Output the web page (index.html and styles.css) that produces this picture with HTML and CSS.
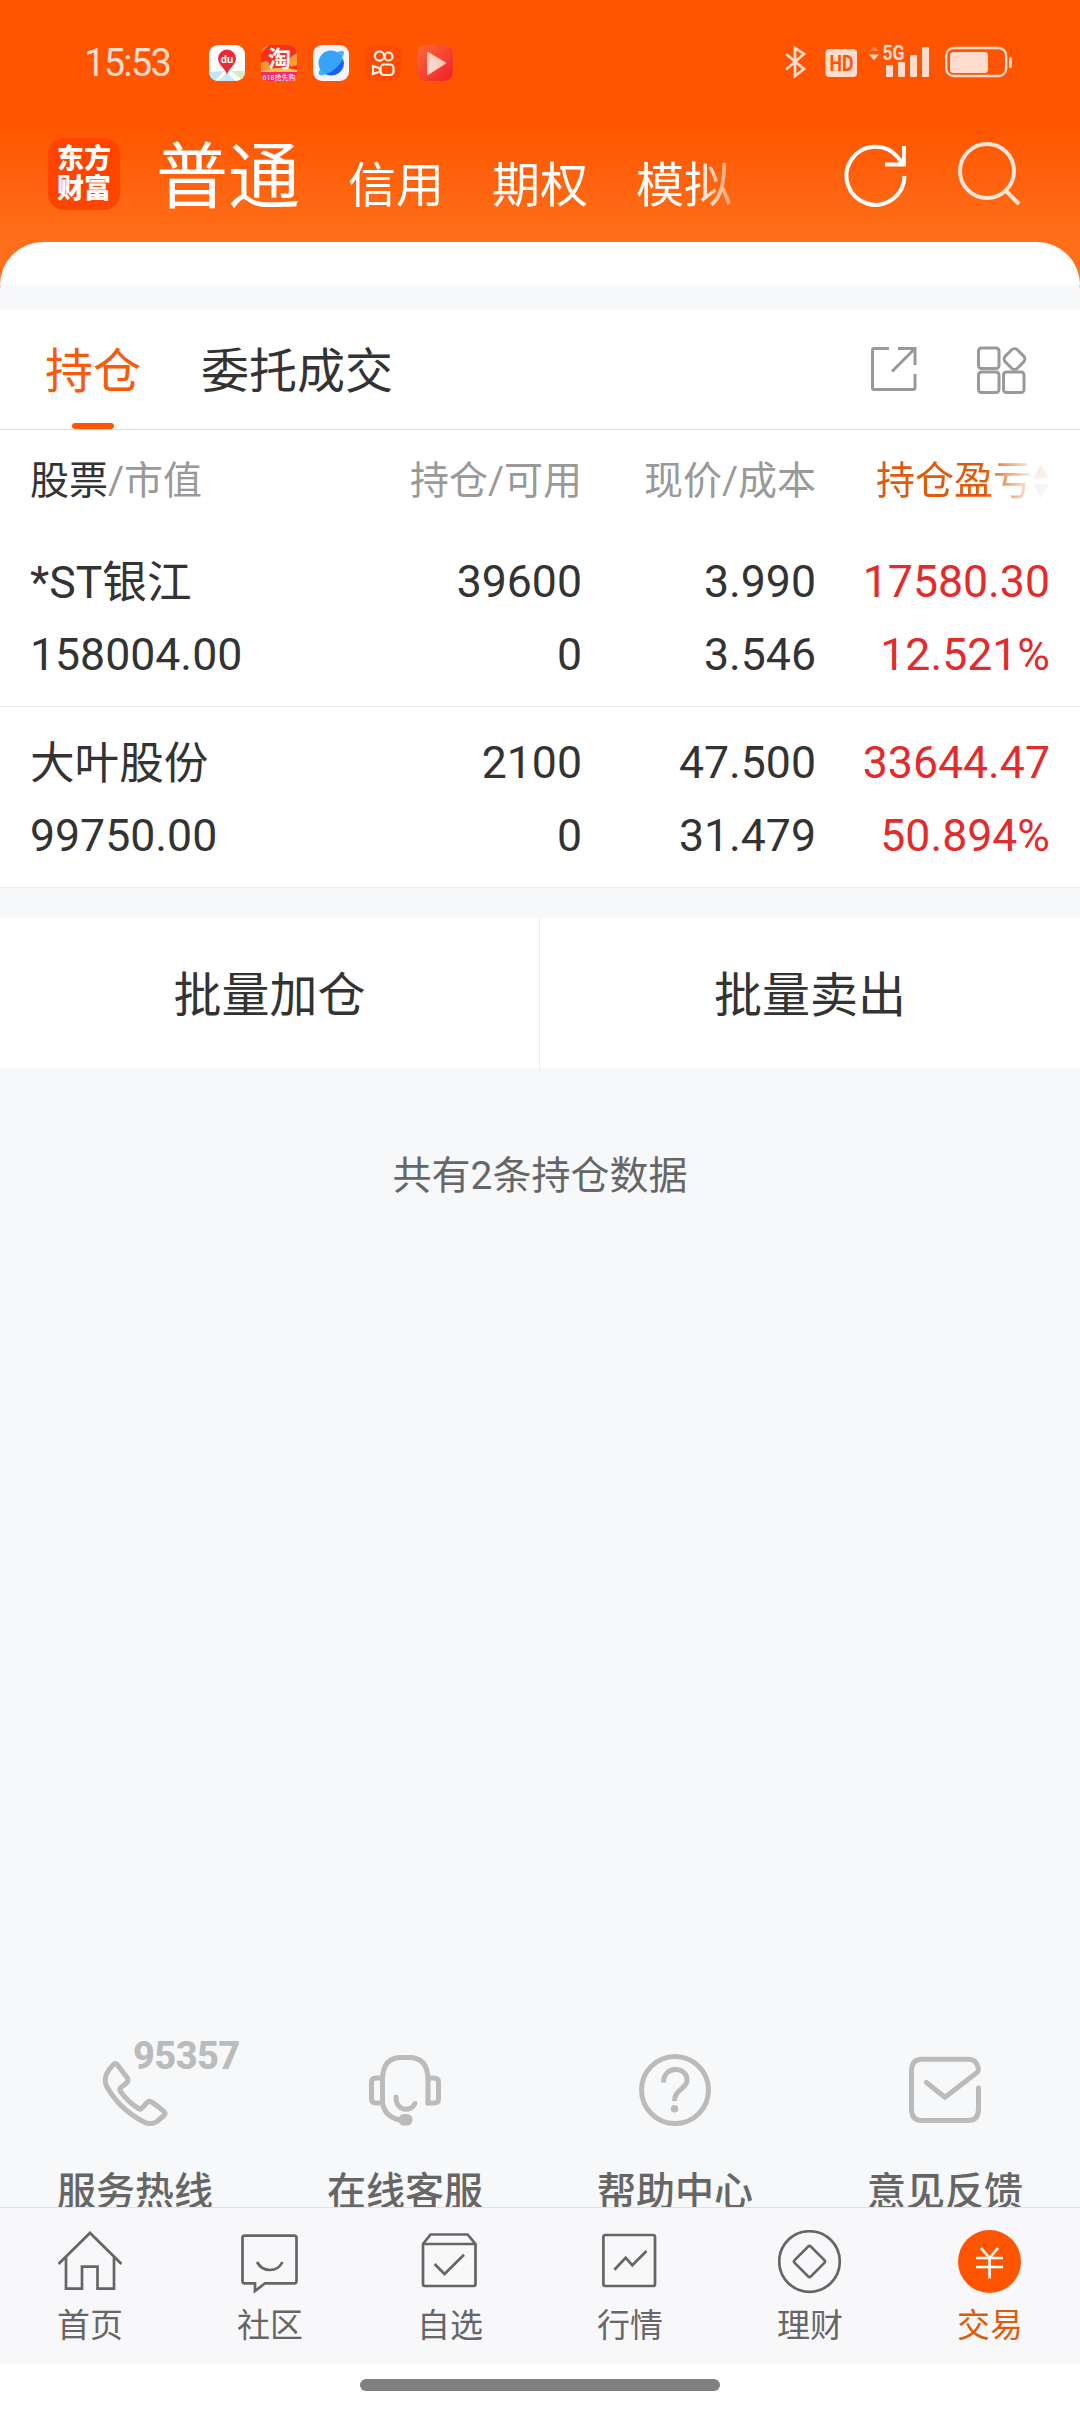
FILE: index.html
```html
<!DOCTYPE html>
<html lang="zh-CN">
<head>
    <meta charset="UTF-8">
    <title>交易 - 持仓</title>
    <link rel="stylesheet" href="styles.css">
</head>
<body>
    <header class="top">
        <div class="status-bar">
            <span class="clock">15:53</span>
            <div class="app-icons">
                <svg width="36" height="36" viewBox="0 0 36 36">
                    <defs><clipPath id="r"><rect width="36" height="36" rx="9"/></clipPath></defs>
                    <g clip-path="url(#r)">
                        <rect width="36" height="36" fill="#fff"/>
                        <path d="M0 27L15 26L6 36H0Z" fill="#bfe6f8"/>
                        <path d="M18 28L27 36H9Z" fill="#c5e8fa"/>
                        <path d="M22 26H36V34H32Z" fill="#d3efb9"/>
                        <path d="M18 30C17 24 9 20 9 13.500A9 9 0 0 1 27 13.500C27 20 19 24 18 30Z" fill="#ee2a36"/>
                    </g>
                    <text x="18" y="17.500" class="du">du</text>
                </svg>
                <svg width="36" height="36" viewBox="0 0 36 36">
                    <g clip-path="url(#r)">
                        <rect width="36" height="36" fill="#f5301c"/>
                        <path d="M0 8L8 0H0ZM0 18Q10 12 8 24L0 26ZM36 8Q24 14 30 22L36 20Z" fill="#ff9a32"/>
                        <path d="M0 26Q18 20 36 25V28H0Z" fill="#ffc04d"/>
                        <rect y="27" width="36" height="9" fill="#ee2c6e"/>
                    </g>
                    <text x="18.500" y="22" class="tao">淘</text>
                    <text x="18" y="34.500" class="tao-sub">618抢先购</text>
                </svg>
                <svg width="36" height="36" viewBox="0 0 36 36">
                    <rect width="36" height="36" rx="9" fill="#f3f5f8"/>
                    <path d="M25 7Q31 4 31 8Q31 10 29 13L13 29Q6 32 6 29Q5 27 8 23Z" fill="#48b4fb"/>
                    <circle cx="18" cy="18" r="12.500" fill="#37a4fa"/>
                    <path d="M30 14Q33 22 26 28Q20 32 13 29Q24 25 30 14Z" fill="#1c62ee"/>
                </svg>
                <svg width="36" height="36" viewBox="0 0 36 36" fill="none" stroke="#fff4e8" stroke-width="2.200">
                    <rect width="36" height="36" rx="9" fill="#ff4a06" stroke="none"/>
                    <circle cx="14.500" cy="11" r="4.700"/>
                    <circle cx="23.500" cy="11.500" r="4"/>
                    <rect x="15.500" y="19.500" width="13" height="10.500" rx="3.500"/>
                    <path d="M8 21V29L15 26.500V23.500Z"/>
                </svg>
                <svg width="36" height="36" viewBox="0 0 36 36">
                    <defs><linearGradient id="p" x2="1" y2="1"><stop stop-color="#ff6a3c"/><stop offset="1" stop-color="#ee1f26"/></linearGradient></defs>
                    <rect width="36" height="36" rx="9" fill="url(#p)"/>
                    <path d="M11 8L28 18L11 29Z" fill="#ffcabd" stroke="#ffcabd" stroke-linejoin="round" stroke-width="2"/>
                    <path d="M10 18L18 13L21 23L11 28Z" fill="#ffe0da" opacity=".5"/>
                </svg>
            </div>
            <svg class="signals" width="230" height="40" viewBox="0 0 230 40">
                <g fill="none" stroke="#ffdccd" stroke-width="2.700">
                    <path d="M2 11L20 26L11 33V5L20 11L2 26.500"/>
                    <rect x="162.200" y="5" width="60" height="28" rx="7.500" stroke-width="2.300"/>
                </g>
                <g fill="#ffdccd">
                    <rect x="41.500" y="6" width="31.500" height="28" rx="4"/>
                    <path d="M85 11.500H95L90 17Z"/>
                    <path d="M85 8H95L90 3Z" opacity=".3"/>
                    <rect x="102" y="22" width="7" height="12" rx="1"/>
                    <rect x="114" y="19" width="7" height="15" rx="1"/>
                    <rect x="126" y="12" width="7" height="22" rx="1"/>
                    <rect x="138" y="4" width="7" height="30" rx="1"/>
                    <rect x="166" y="9" width="38" height="21" rx="3.500"/>
                    <rect x="225" y="14" width="3" height="11" rx="1.500"/>
                </g>
                <text x="45.500" y="28" class="hd" textLength="24" lengthAdjust="spacingAndGlyphs">HD</text>
                <text x="98.500" y="17" class="net" textLength="22" lengthAdjust="spacingAndGlyphs">5G</text>
            </svg>
        </div>
        <nav class="accounts">
            <div class="logo"><span>东方</span><span>财富</span></div>
            <div class="account-tabs">
                <span class="account active">普通</span>
                <span class="account">信用</span>
                <span class="account">期权</span>
                <span class="account">模拟</span>
            </div>
            <svg class="refresh" width="64" height="64" viewBox="0 0 64 64" fill="none" stroke="#fff" stroke-width="4">
                <path d="M60.500 33A29 29 0 1 1 54 14.500L59 21"/>
                <path d="M60 3V21.500H41"/>
            </svg>
            <svg class="search" width="66" height="66" viewBox="0 0 66 66" fill="none" stroke="#ffe5d8" stroke-width="4">
                <circle cx="30" cy="30" r="27"/>
                <path d="M48.500 49.500L62 63"/>
            </svg>
        </nav>
    </header>

    <div class="sheet-top"></div>

    <main>
        <section class="tabs">
            <div class="tab active">持仓</div>
            <div class="tab">委托成交</div>
            <div class="tools">
                <svg width="48" height="48" viewBox="0 0 48 48" fill="none" stroke="#999" stroke-width="3">
                    <path d="M19 2.500H4Q2.500 2.500 2.500 4V42Q2.500 43.500 4 43.500H43Q45 43.500 45 41.500V28"/>
                    <path d="M28 2.500H45V19M45 2.500L22 25.500"/>
                </svg>
                <svg width="52" height="50" viewBox="0 0 52 50" fill="none" stroke="#999" stroke-width="3">
                    <rect x="3.500" y="2" width="20.500" height="20.500" rx="3"/>
                    <rect x="3.500" y="26" width="20.500" height="20.500" rx="3"/>
                    <rect x="28.500" y="26" width="20.500" height="20.500" rx="3"/>
                    <rect x="31" y="4.500" width="17" height="17" rx="4" transform="rotate(45 39.500 13)"/>
                </svg>
            </div>
        </section>

        <section class="holdings">
            <div class="row head">
                <div><b>股票</b>/市值</div>
                <div>持仓/可用</div>
                <div>现价/成本</div>
                <div class="sort">
                    <span>持仓盈亏</span>
                    <svg width="16" height="36" viewBox="0 0 16 36"><path d="M0 15L8 1L16 15Z" fill="#ff5500"/><path d="M0 21H16L8 35Z" fill="#999"/></svg>
                </div>
            </div>
            <div class="row">
                <div><p class="name">*ST银江</p><p>158004.00</p></div>
                <div><p>39600</p><p>0</p></div>
                <div><p>3.990</p><p>3.546</p></div>
                <div class="up"><p>17580.30</p><p>12.521%</p></div>
            </div>
            <div class="row">
                <div><p class="name">大叶股份</p><p>99750.00</p></div>
                <div><p>2100</p><p>0</p></div>
                <div><p>47.500</p><p>31.479</p></div>
                <div class="up"><p>33644.47</p><p>50.894%</p></div>
            </div>
        </section>

        <section class="batch">
            <div>批量加仓</div>
            <div>批量卖出</div>
        </section>

        <p class="count">共有2条持仓数据</p>

        <section class="services">
            <div class="service">
                <span class="hotline">95357</span>
                <svg width="72" height="72" viewBox="0 0 72 72">
                    <path d="M14 11Q16.400 8 18.500 11L28 23.500Q30 26.500 27.500 29L22 33.500Q20 35 21.500 37.500Q29 48 39.500 54.500Q41.500 56 43 54L48 48.500Q50 46.500 52.500 48Q59 52 65 57.500Q67 59.500 65 61.500L58 67.500Q52 71.500 45 68Q20 55 7.500 32Q5 27 7.500 20Q10 15 14 11Z"/>
                </svg>
                <span>服务热线</span>
            </div>
            <div class="service">
                <svg width="72" height="72" viewBox="0 0 72 72">
                    <path d="M13.500 49V24Q14.500 3.500 32 3.500H40Q58 3.500 59 24V49M13.500 49Q16 63 31 66"/>
                    <path d="M13 24H7Q2.500 24 2.500 28V45Q2.500 49 7 49H13M59 24H65Q69.500 24 69.500 28V45Q69.500 49 65 49H59"/>
                    <path d="M27 43C27 58 42 58 46 49.500"/>
                    <rect x="32" y="62.500" width="9" height="6.500" rx="3" fill="#bbb"/>
                </svg>
                <span>在线客服</span>
            </div>
            <div class="service">
                <svg width="72" height="72" viewBox="0 0 72 72">
                    <circle cx="36" cy="36" r="33.500"/>
                    <path stroke-linecap="butt" d="M24.500 28.500C24.500 11 48 12 48 26C48 35 35.500 35 35.500 47"/>
                    <circle cx="35.500" cy="54.700" r="3.800" fill="#bbb" stroke="none"/>
                </svg>
                <span>帮助中心</span>
            </div>
            <div class="service">
                <svg width="72" height="72" viewBox="0 0 72 72">
                    <path d="M69.500 34V55Q69.500 66.500 59 66.500H13Q2.500 66.500 2.500 55V17Q2.500 5.300 13 5.300H59Q67 5.300 69 13Q70 17 68 18.500L36 43.300L17.400 28.500"/>
                </svg>
                <span>意见反馈</span>
            </div>
        </section>
    </main>

    <nav class="bottom-nav">
        <div class="nav-item">
            <svg width="64" height="64" viewBox="0 0 64 64">
                <path d="M.5 34L32 3L63.500 34M8 27V58.700H24V36.700H39.500V58.700H56V27"/>
            </svg>
            <span>首页</span>
        </div>
        <div class="nav-item">
            <svg width="64" height="64" viewBox="0 0 64 64">
                <path d="M6.500 5.700H56.500Q58.500 5.700 58.500 8V51Q58.500 53.300 56.500 53.300H27L17 61V53.300H6.500Q4.500 53.300 4.500 51V8Q4.500 5.700 6.500 5.700Z"/>
                <path d="M19 32Q23.500 40 32 40Q40.500 40 44.500 32"/>
            </svg>
            <span>社区</span>
        </div>
        <div class="nav-item">
            <svg width="64" height="64" viewBox="0 0 64 64">
                <path d="M5 14L12.500 4.500H49.600L57.500 14V54Q57.500 56 55.500 56H7Q5 56 5 54ZM5 14H57.500M16.600 34L26.500 44L46 24.700"/>
            </svg>
            <span>自选</span>
        </div>
        <div class="nav-item">
            <svg width="64" height="64" viewBox="0 0 64 64">
                <rect x="5.400" y="5" width="51.600" height="51" rx="2"/>
                <path d="M16.400 39.700L27.700 27.700L34.300 35.300L48.500 21"/>
            </svg>
            <span>行情</span>
        </div>
        <div class="nav-item">
            <svg width="64" height="64" viewBox="0 0 64 64">
                <circle cx="31.500" cy="31.500" r="30.300"/>
                <rect x="20" y="20" width="23" height="23" rx="2" transform="rotate(45 31.500 31.500)"/>
            </svg>
            <span>理财</span>
        </div>
        <div class="nav-item active">
            <svg width="64" height="64" viewBox="0 0 64 64">
                <circle cx="31.500" cy="31.500" r="31.500"/>
                <path d="M23 18L31.500 28L40 18M31.500 28V48.500M18 28H45M18 37H45"/>
            </svg>
            <span>交易</span>
        </div>
    </nav>
    <div class="gesture"><i></i></div>
</body>
</html>
```

FILE: styles.css
```css
* {
    box-sizing: border-box;
    margin: 0;
    padding: 0;
}
body {
    width: 1080px;
    height: 2412px;
    display: flex;
    flex-direction: column;
    overflow: hidden;
    background: #f7f8fa;
    color: #333;
    font-family: Roboto, "Noto Sans CJK SC", sans-serif;
}
svg {
    display: block;
    flex-shrink: 0;
}

/* header */
.top {
    height: 290px;
    flex-shrink: 0;
    background: linear-gradient(#ff5500 0, #ff5500 122px, #ff6e19 235px);
    color: #fff;
}
.status-bar {
    display: flex;
    height: 126px;
    padding: 43px 66px 0 84px;
}
.clock {
    width: 125px;
    padding-top: 1px;
    color: #ffdccd;
    font-size: 38px;
    line-height: 38px;
    letter-spacing: -1.7px;
}
.app-icons {
    display: flex;
    gap: 16px;
    padding-top: 2px;
}
.signals {
    margin-left: auto;
}
.du {
    fill: #fff;
    font-size: 11px;
    font-weight: bold;
    text-anchor: middle;
}
.tao {
    fill: #fff;
    font-size: 23px;
    font-weight: bold;
    text-anchor: middle;
}
.tao-sub {
    fill: #fff;
    font-size: 7px;
    text-anchor: middle;
}
.hd {
    fill: #ff5500;
    font-size: 22px;
    font-weight: bold;
}
.net {
    fill: #ffdccd;
    font-size: 21px;
    font-weight: bold;
}
.accounts {
    display: flex;
    padding: 12px 0 0 48px;
}
.logo {
    width: 72px;
    height: 72px;
    padding-top: 6px;
    border-radius: 16px;
    background: #ff4400;
    font-size: 27px;
    font-weight: 900;
    line-height: 30px;
    text-align: center;
}
.logo span {
    display: block;
}
.account-tabs {
    display: flex;
    align-items: baseline;
    gap: 48px;
    width: 600px;
    height: 104px;
    margin-top: -10px;
    margin-left: 36px;
    line-height: 100px;
    -webkit-mask-image: linear-gradient(90deg, #000 540px, transparent 600px);
    mask-image: linear-gradient(90deg, #000 540px, transparent 600px);
}
.account {
    font-size: 48px;
}
.account.active {
    font-size: 72px;
}
.refresh {
    margin: 5px 0 0 88px;
}
.search {
    margin: 3px 0 0 49px;
}

/* white sheet that overlaps the header */
.sheet-top {
    height: 43px;
    flex-shrink: 0;
    margin-top: -48px;
    border-radius: 48px 48px 0 0;
    background: #fff;
    box-shadow: 0 5px 0 #f7f8fa;
}

main {
    flex: 1;
    min-height: 0;
    display: flex;
    flex-direction: column;
    overflow: hidden;
    padding-top: 24px;
}
.tabs {
    display: flex;
    gap: 60px;
    height: 121px;
    padding: 0 53px 0 45px;
    flex-shrink: 0;
    background: #fff;
    border-bottom: 1px solid #ddd;
    font-size: 48px;
    line-height: 125px;
}
.tab.active {
    color: #f75a08;
}
.tab.active::after {
    content: "";
    display: block;
    width: 42px;
    height: 6px;
    margin: -11px auto 0;
    border-radius: 3px;
    background: #ff5500;
}
.tools {
    display: flex;
    gap: 57px;
    margin-left: auto;
    padding-top: 37px;
}

/* holdings table */
.holdings {
    flex-shrink: 0;
    background: #fff;
}
.row {
    display: grid;
    grid-template-columns: 300px 252px 234px 234px;
    height: 181px;
    padding: 20px 30px 0;
    border-bottom: 1px solid #eaebed;
    font-size: 44.6px;
    text-align: right;
}
.row p {
    height: 73px;
    line-height: 73px;
}
.row .name {
    padding-top: 1px;
}
.row > div:first-child {
    text-align: left;
}
.row.head {
    height: 96px;
    padding-top: 0;
    border: none;
    color: #999;
    font-size: 39px;
    line-height: 102px;
}
.head b {
    color: #333;
    font-weight: normal;
}
.sort {
    display: flex;
    justify-content: flex-end;
    align-items: center;
    gap: 1px;
    padding-right: 1px;
    color: #e05a0c;
    -webkit-mask-image: linear-gradient(90deg, #000 168px, rgba(0, 0, 0, .13) 214px, rgba(0, 0, 0, .08));
    mask-image: linear-gradient(90deg, #000 168px, rgba(0, 0, 0, .13) 214px, rgba(0, 0, 0, .08));
}
.up {
    color: #e32b2b;
}

.batch {
    display: grid;
    grid-template-columns: 540px 540px;
    height: 150px;
    margin-top: 30px;
    flex-shrink: 0;
    background: #fff;
    font-size: 48px;
    line-height: 156px;
    text-align: center;
}
.batch div:first-child {
    border-right: 1px solid #eee;
}
.count {
    margin-top: 79px;
    color: #666;
    font-size: 39px;
    line-height: 58px;
    text-align: center;
}

/* the captions run under the bottom nav */
.services {
    display: grid;
    grid-template-columns: repeat(4, 1fr);
    height: 153px;
    margin-top: auto;
    flex-shrink: 0;
}
.service {
    position: relative;
    display: flex;
    flex-direction: column;
    align-items: center;
    gap: 37px;
    color: #666;
    font-size: 39px;
    font-weight: 500;
    line-height: 58px;
}
.service svg {
    fill: none;
    stroke: #bbb;
    stroke-width: 5;
    stroke-linecap: round;
    stroke-linejoin: round;
}
.hotline {
    position: absolute;
    left: 133px;
    top: -16px;
    color: #bbb;
    font-size: 38px;
    font-weight: 800;
    line-height: 37px;
    letter-spacing: -.6px;
}

/* bottom nav */
.bottom-nav {
    display: grid;
    grid-template-columns: repeat(6, 1fr);
    height: 157px;
    flex-shrink: 0;
    border-top: 1px solid #e2e2e4;
    background: #f8f8fa;
}
.nav-item {
    display: flex;
    flex-direction: column;
    align-items: center;
    gap: 7px;
    padding-top: 22px;
    color: #666;
    font-size: 33px;
    line-height: 50px;
}
.nav-item svg {
    fill: none;
    stroke: #666;
    stroke-width: 2.7;
}
.nav-item.active {
    color: #e05a0c;
}
.nav-item.active circle {
    fill: #ff5500;
    stroke: none;
}
.nav-item.active path {
    stroke: #fff;
}
.gesture {
    height: 48px;
    flex-shrink: 0;
    padding-top: 15px;
    background: #fff;
}
.gesture i {
    display: block;
    width: 360px;
    height: 12px;
    margin: 0 auto;
    border-radius: 6px;
    background: #808080;
}
```
